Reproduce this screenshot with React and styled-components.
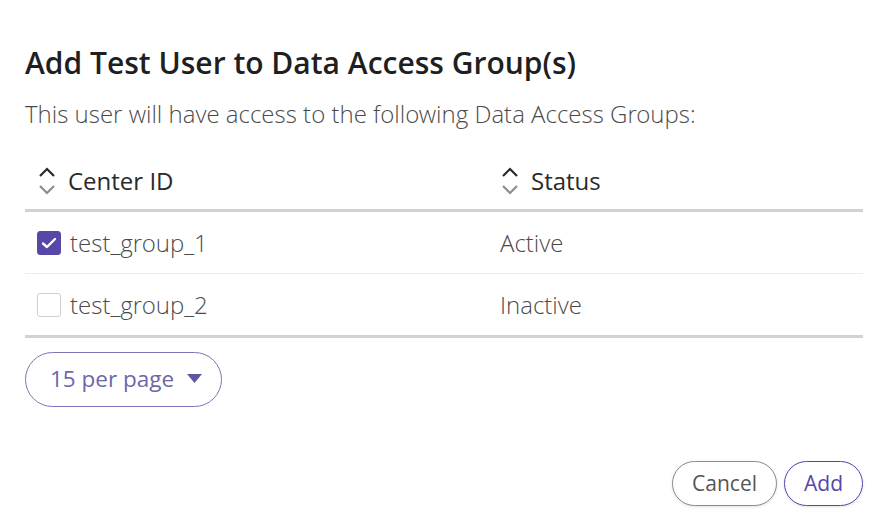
import styled, { createGlobalStyle } from 'styled-components'

const GlobalStyle = createGlobalStyle`
  html, body {
    margin: 0;
    background: #ffffff;
  }
  body {
    font-family: "Open Sans", "Noto Sans", sans-serif;
  }
`

const lightFont = `"Open Sans Light", "Open Sans", "Noto Sans", sans-serif`

const rows = [
  { id: 'test_group_1', status: 'Active', checked: true },
  { id: 'test_group_2', status: 'Inactive', checked: false },
]

const Modal = styled.div`
  width: 892px;
  height: 532px;
  box-sizing: border-box;
  padding: 41px 29px 26px 25px;
  display: flex;
  flex-direction: column;
`

const Title = styled.h2`
  margin: 0;
  font-size: 30px;
  font-weight: 600;
  line-height: 44px;
  color: #1f1f1f;
`

const Subtitle = styled.p`
  margin: 11px 0 0;
  font-family: ${lightFont};
  font-size: 24px;
  font-weight: 300;
  line-height: 36px;
  color: #4a4a4a;
`

const Table = styled.div`
  margin-top: 18px;
  display: flex;
  flex-direction: column;
`

const HeaderRow = styled.div`
  display: grid;
  grid-template-columns: 475px 1fr;
  height: 59px;
  align-items: center;
  border-bottom: 3px solid #d2d2d2;
`

const HeaderCell = styled.div`
  display: flex;
  align-items: center;
  gap: 11px;
  padding-left: ${p => (p.first ? 12 : 0)}px;
  font-size: 24px;
  font-weight: 400;
  color: #2a2a2a;
  padding-top: 2px;
`

const Row = styled.div`
  display: grid;
  grid-template-columns: 475px 1fr;
  height: 61px;
  align-items: center;
  border-bottom: ${p => (p.last ? '3px solid #d2d2d2' : '1px solid #ececec')};
`

const Cell = styled.div`
  display: flex;
  align-items: center;
  gap: 9px;
  padding-left: 12px;
  font-family: ${lightFont};
  font-size: 24px;
  font-weight: 300;
  color: #4a4a4a;
`

const StatusCell = styled(Cell)`
  padding-left: 0;
`

const Box = styled.span`
  width: 24px;
  height: 24px;
  box-sizing: border-box;
  border-radius: 3px;
  display: flex;
  align-items: center;
  justify-content: center;
  background: ${p => (p.checked ? '#5747a8' : '#ffffff')};
  border: 1px solid ${p => (p.checked ? '#5747a8' : '#cfcfcf')};
`

const PerPage = styled.button`
  align-self: flex-start;
  margin-top: 14px;
  height: 55px;
  width: 197px;
  box-sizing: border-box;
  border: 1px solid #7c75b8;
  border-radius: 28px;
  background: #fff;
  color: #6c66aa;
  font-family: inherit;
  font-size: 22.5px;
  font-weight: 400;
  display: flex;
  align-items: center;
  gap: 13px;
  padding: 0 0 2px 24px;
`

const Footer = styled.div`
  margin-top: auto;
  display: flex;
  justify-content: flex-end;
  gap: 7px;
`

const PillButton = styled.button`
  height: 45px;
  box-sizing: border-box;
  border-radius: 23px;
  background: #fff;
  font-family: inherit;
  font-size: 21px;
  font-weight: 400;
  padding: 0 ${p => p.pad}px 2px;
  border: 1px solid ${p => (p.primary ? '#5747a8' : '#8a8a8a')};
  color: ${p => (p.primary ? '#5747a8' : '#555555')};
  box-shadow: 0 1px 3px rgba(0, 0, 0, 0.12);
`

const SortIcon = () => (
  <svg width="20" height="28" viewBox="0 0 20 28">
    <path d="M3 9 L10 2 L17 9" fill="none" stroke="#2a2a2a" strokeWidth="2.2" />
    <path d="M3 19 L10 26 L17 19" fill="none" stroke="#8c8c8c" strokeWidth="2.2" />
  </svg>
)

const Check = () => (
  <svg width="16" height="14" viewBox="0 0 16 14">
    <path d="M2 7.5 L6 11 L14 3" fill="none" stroke="#fff" strokeWidth="2.4" strokeLinecap="round" strokeLinejoin="round" />
  </svg>
)

const Caret = () => (
  <svg width="15" height="10" viewBox="0 0 15 10">
    <path d="M0 0 L15 0 L7.5 9 Z" fill="#5d57a3" />
  </svg>
)

const App = () => (
  <>
    <GlobalStyle />
    <Modal>
      <Title>Add Test User to Data Access Group(s)</Title>
      <Subtitle>This user will have access to the following Data Access Groups:</Subtitle>
      <Table>
        <HeaderRow>
          <HeaderCell first><SortIcon />Center ID</HeaderCell>
          <HeaderCell><SortIcon />Status</HeaderCell>
        </HeaderRow>
        {rows.map((r, i) => (
          <Row key={r.id} last={i === rows.length - 1}>
            <Cell>
              <Box checked={r.checked}>{r.checked && <Check />}</Box>
              {r.id}
            </Cell>
            <StatusCell>{r.status}</StatusCell>
          </Row>
        ))}
      </Table>
      <PerPage>15 per page <Caret /></PerPage>
      <Footer>
        <PillButton pad={19}>Cancel</PillButton>
        <PillButton primary pad={19}>Add</PillButton>
      </Footer>
    </Modal>
  </>
)

export default App
